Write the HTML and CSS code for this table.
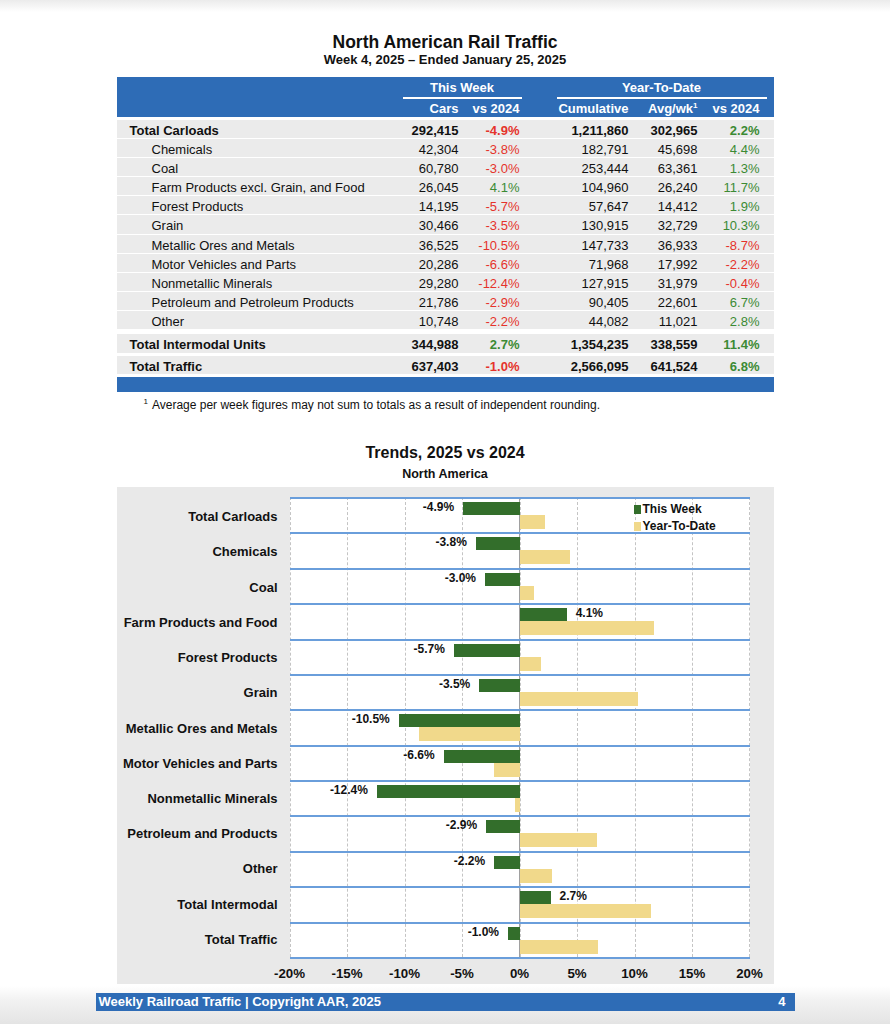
FILE: index.html
```html
<!DOCTYPE html>
<html lang="en">
<head>
<meta charset="utf-8">
<title>North American Rail Traffic</title>
<link rel="stylesheet" href="styles.css">
</head>
<body>
<div class="page">
  <h1 class="title">North American Rail Traffic</h1>
  <p class="subtitle">Week 4, 2025 – Ended January 25, 2025</p>

  <div class="thead">
    <div class="trow">
      <div class="group g1">This Week</div>
      <div class="group g2">Year-To-Date</div>
    </div>
    <div class="trow">
      <div class="c2 num">Cars</div>
      <div class="c3 num">vs 2024</div>
      <div class="c5 num">Cumulative</div>
      <div class="c6 num">Avg/wk<sup>1</sup></div>
      <div class="c7 num">vs 2024</div>
    </div>
  </div>

  <div class="tbody">
    <div class="row total"><div class="lbl">Total Carloads</div><div class="num">292,415</div><div class="num neg">-4.9%</div><div></div><div class="num">1,211,860</div><div class="num">302,965</div><div class="num pos">2.2%</div></div>
    <div class="row"><div class="lbl">Chemicals</div><div class="num">42,304</div><div class="num neg">-3.8%</div><div></div><div class="num">182,791</div><div class="num">45,698</div><div class="num pos">4.4%</div></div>
    <div class="row"><div class="lbl">Coal</div><div class="num">60,780</div><div class="num neg">-3.0%</div><div></div><div class="num">253,444</div><div class="num">63,361</div><div class="num pos">1.3%</div></div>
    <div class="row"><div class="lbl">Farm Products excl. Grain, and Food</div><div class="num">26,045</div><div class="num pos">4.1%</div><div></div><div class="num">104,960</div><div class="num">26,240</div><div class="num pos">11.7%</div></div>
    <div class="row"><div class="lbl">Forest Products</div><div class="num">14,195</div><div class="num neg">-5.7%</div><div></div><div class="num">57,647</div><div class="num">14,412</div><div class="num pos">1.9%</div></div>
    <div class="row"><div class="lbl">Grain</div><div class="num">30,466</div><div class="num neg">-3.5%</div><div></div><div class="num">130,915</div><div class="num">32,729</div><div class="num pos">10.3%</div></div>
    <div class="row"><div class="lbl">Metallic Ores and Metals</div><div class="num">36,525</div><div class="num neg">-10.5%</div><div></div><div class="num">147,733</div><div class="num">36,933</div><div class="num neg">-8.7%</div></div>
    <div class="row"><div class="lbl">Motor Vehicles and Parts</div><div class="num">20,286</div><div class="num neg">-6.6%</div><div></div><div class="num">71,968</div><div class="num">17,992</div><div class="num neg">-2.2%</div></div>
    <div class="row"><div class="lbl">Nonmetallic Minerals</div><div class="num">29,280</div><div class="num neg">-12.4%</div><div></div><div class="num">127,915</div><div class="num">31,979</div><div class="num neg">-0.4%</div></div>
    <div class="row"><div class="lbl">Petroleum and Petroleum Products</div><div class="num">21,786</div><div class="num neg">-2.9%</div><div></div><div class="num">90,405</div><div class="num">22,601</div><div class="num pos">6.7%</div></div>
    <div class="row"><div class="lbl">Other</div><div class="num">10,748</div><div class="num neg">-2.2%</div><div></div><div class="num">44,082</div><div class="num">11,021</div><div class="num pos">2.8%</div></div>
    <div class="row total big first-big"><div class="lbl">Total Intermodal Units</div><div class="num">344,988</div><div class="num pos">2.7%</div><div></div><div class="num">1,354,235</div><div class="num">338,559</div><div class="num pos">11.4%</div></div>
    <div class="row total big last-big"><div class="lbl">Total Traffic</div><div class="num">637,403</div><div class="num neg">-1.0%</div><div></div><div class="num">2,566,095</div><div class="num">641,524</div><div class="num pos">6.8%</div></div>
  </div>
  <div class="tfoot"></div>
  <p class="footnote"><sup>1</sup>Average per week figures may not sum to totals as a result of independent rounding.</p>

  <h2 class="chart-title">Trends, 2025 vs 2024</h2>
  <p class="chart-sub">North America</p>

  <div class="chart">
    <div class="cats">
      <div>Total Carloads</div>
      <div>Chemicals</div>
      <div>Coal</div>
      <div>Farm Products and Food</div>
      <div>Forest Products</div>
      <div>Grain</div>
      <div>Metallic Ores and Metals</div>
      <div>Motor Vehicles and Parts</div>
      <div>Nonmetallic Minerals</div>
      <div>Petroleum and Products</div>
      <div>Other</div>
      <div>Total Intermodal</div>
      <div>Total Traffic</div>
    </div>
    <div class="plot-col">
      <div class="plot">
        <div class="gridlines"><span></span><span></span><span></span><span></span><span></span><span></span><span></span><span></span></div>
        <div class="zero"></div>
        <div class="legend">
          <div class="leg"><i class="sw wk"></i>This Week</div>
          <div class="leg"><i class="sw ytd"></i>Year-To-Date</div>
        </div>
        <div class="rows" id="rows"></div>
      </div>
      <div class="axis">
        <span>-20%</span><span>-15%</span><span>-10%</span><span>-5%</span><span>0%</span><span>5%</span><span>10%</span><span>15%</span><span>20%</span>
      </div>
    </div>
  </div>
</div>
<div class="footer">
  <span>Weekly Railroad Traffic | Copyright AAR, 2025</span>
  <span>4</span>
</div>
<script src="chart.js"></script>
</body>
</html>
```

FILE: chart.js
```js
(function () {
  var data = [
    [-4.9, 2.2], [-3.8, 4.4], [-3.0, 1.3], [4.1, 11.7], [-5.7, 1.9],
    [-3.5, 10.3], [-10.5, -8.7], [-6.6, -2.2], [-12.4, -0.4],
    [-2.9, 6.7], [-2.2, 2.8], [2.7, 11.4], [-1.0, 6.8]
  ];
  var PX = 11.5;
  var rows = document.getElementById('rows');
  function line(v, cls, showLabel) {
    var l = document.createElement('div');
    l.className = 'bline ' + cls;
    var left = document.createElement('div');
    left.className = 'half left';
    var right = document.createElement('div');
    right.className = 'half right';
    var bar = document.createElement('div');
    bar.className = 'bar';
    bar.style.width = (Math.abs(v) * PX) + 'px';
    var target = v < 0 ? left : right;
    var lab = null;
    if (showLabel) {
      lab = document.createElement('span');
      lab.className = 'val';
      lab.textContent = v.toFixed(1) + '%';
    }
    if (v < 0) {
      if (lab) target.appendChild(lab);
      target.appendChild(bar);
    } else {
      target.appendChild(bar);
      if (lab) target.appendChild(lab);
    }
    l.appendChild(left);
    l.appendChild(right);
    return l;
  }
  data.forEach(function (d) {
    var r = document.createElement('div');
    r.className = 'crow';
    r.appendChild(line(d[0], 'wk', true));
    r.appendChild(line(d[1], 'ytd', false));
    rows.appendChild(r);
  });
})();
```

FILE: styles.css
```css
html {
  height: 1024px;
  background: linear-gradient(to bottom, #ebebeb 0, #ffffff 12px, #ffffff 986px, #f2f2f2 1000px, #e4e4e4 1024px);
}
body {
  margin: 0;
  font-family: "Liberation Sans", Arial, sans-serif;
  color: #111;
}
.page {
  width: 657px;
  margin: 0 auto;
  padding-top: 32px;
}
.title {
  margin: 0;
  font-size: 17.5px;
  line-height: 20px;
  font-weight: bold;
  text-align: center;
}
.subtitle {
  margin: 0 0 9px;
  font-size: 13px;
  line-height: 16px;
  font-weight: bold;
  text-align: center;
}
.thead {
  background: #2e6cb6;
  color: #fff;
  font-weight: bold;
  font-size: 13px;
  padding: 3px 0 1px;
  height: 40px;
  box-sizing: border-box;
}
.trow,
.row {
  display: grid;
  grid-template-columns: 286px 58px 61px 35px 74px 69px 62px 12px;
}
.trow + .trow {
  margin-top: 2px;
}
.trow > div {
  line-height: 16px;
}
.group {
  text-align: center;
  border-bottom: 2px solid #fff;
  padding-bottom: 1px;
}
.g1 { grid-column: 2 / 4; }
.g2 { grid-column: 5 / 8; margin-right: -5px; }
.c2 { grid-column: 2; }
.c3 { grid-column: 3; }
.c5 { grid-column: 5; }
.c6 { grid-column: 6; }
.c7 { grid-column: 7; }
.num {
  text-align: right;
  padding-right: 2px;
  white-space: nowrap;
}
sup {
  font-size: 8px;
  line-height: 0;
  vertical-align: 5px;
}
.tbody {
  margin-top: 3px;
}
.row {
  background: #ebebeb;
  height: 18.1px;
  line-height: 18px;
  padding-top: 2px;
  box-sizing: border-box;
  font-size: 13px;
  margin-bottom: 1px;
}
.row .lbl {
  padding-left: 35px;
  white-space: nowrap;
}
.row.total {
  font-weight: bold;
}
.row.total .lbl {
  padding-left: 13px;
}
.row.big {
  line-height: 19px;
  padding-top: 1px;
}
.row.first-big {
  height: 19px;
  margin-top: 5px;
  margin-bottom: 3px;
}
.row.last-big {
  height: 18px;
  margin-bottom: 0;
}
.neg { color: #e5332b; }
.pos { color: #3c8a34; }
.tfoot {
  margin-top: 3px;
  height: 15px;
  background: #2e6cb6;
}
.footnote {
  margin: 6px 0 0;
  padding-left: 27px;
  font-size: 12px;
  line-height: 14px;
}
.footnote sup {
  margin-right: 4px;
}
.chart-title {
  margin: 31px 0 0;
  font-size: 16px;
  line-height: 20px;
  font-weight: bold;
  text-align: center;
}
.chart-sub {
  margin: 3px 0 5px;
  font-size: 12.5px;
  line-height: 16px;
  font-weight: bold;
  text-align: center;
}
.chart {
  background: #e9e9e9;
  display: grid;
  grid-template-columns: 173px 460px;
  padding: 10px 24px 0 0;
  height: 497px;
  box-sizing: border-box;
}
.cats {
  display: grid;
  grid-template-rows: repeat(13, 1fr);
  height: 460px;
  padding-top: 2px;
  box-sizing: border-box;
}
.cats > div {
  display: flex;
  align-items: center;
  justify-content: flex-end;
  padding-right: 12px;
  font-size: 13px;
  font-weight: bold;
  white-space: nowrap;
}
.plot {
  position: relative;
  background: #fff;
  height: 460px;
  border-bottom: 2px solid #6a9edb;
}
.gridlines {
  position: absolute;
  top: 0;
  bottom: 0;
  left: 0;
  right: 0;
  display: flex;
}
.gridlines span {
  flex: 0 0 57.5px;
  box-sizing: border-box;
  border-left: 1px dashed #c4c4c4;
}
.gridlines span:last-child {
  border-right: 1px dashed #c4c4c4;
}
.zero {
  position: absolute;
  top: 0;
  bottom: 0;
  left: 229.5px;
  border-left: 1px solid #a0a0a0;
}
.rows {
  position: relative;
  display: grid;
  grid-template-rows: repeat(13, 1fr);
  height: 460px;
}
.crow {
  border-top: 2px solid #6a9edb;
  padding-top: 3px;
}
.bline {
  display: grid;
  grid-template-columns: 230px 230px;
}
.bline.wk { height: 13px; }
.bline.ytd { height: 14px; }
.half {
  display: flex;
  align-items: center;
  gap: 9px;
  height: 100%;
}
.half.left { justify-content: flex-end; }
.half.right { justify-content: flex-start; }
.bar {
  height: 100%;
  flex: none;
}
.wk .bar { background: #336e2b; }
.ytd .bar { background: #f1d98b; }
.val {
  font-size: 12px;
  font-weight: bold;
  line-height: 13px;
  white-space: nowrap;
  margin-top: -2px;
}
.legend {
  position: absolute;
  left: 344px;
  top: 4px;
  z-index: 2;
}
.leg {
  display: flex;
  align-items: center;
  font-size: 12px;
  font-weight: bold;
  line-height: 17px;
}
.sw {
  display: inline-block;
  width: 7px;
  height: 9px;
  margin-right: 2px;
}
.sw.wk { background: #336e2b; }
.sw.ytd { background: #f1d98b; }
.axis {
  display: grid;
  grid-template-columns: repeat(9, 57.5px);
  margin-left: -28.75px;
  padding-top: 8px;
  font-size: 13.3px;
  font-weight: bold;
  line-height: 14px;
  text-align: center;
}
.footer {
  width: 699px;
  margin: 9px auto 0;
  height: 18px;
  background: #2e6cb6;
  color: #fff;
  font-size: 13px;
  font-weight: bold;
  line-height: 18px;
  display: flex;
  justify-content: space-between;
  padding: 0 9px 0 3px;
  box-sizing: border-box;
}
```
